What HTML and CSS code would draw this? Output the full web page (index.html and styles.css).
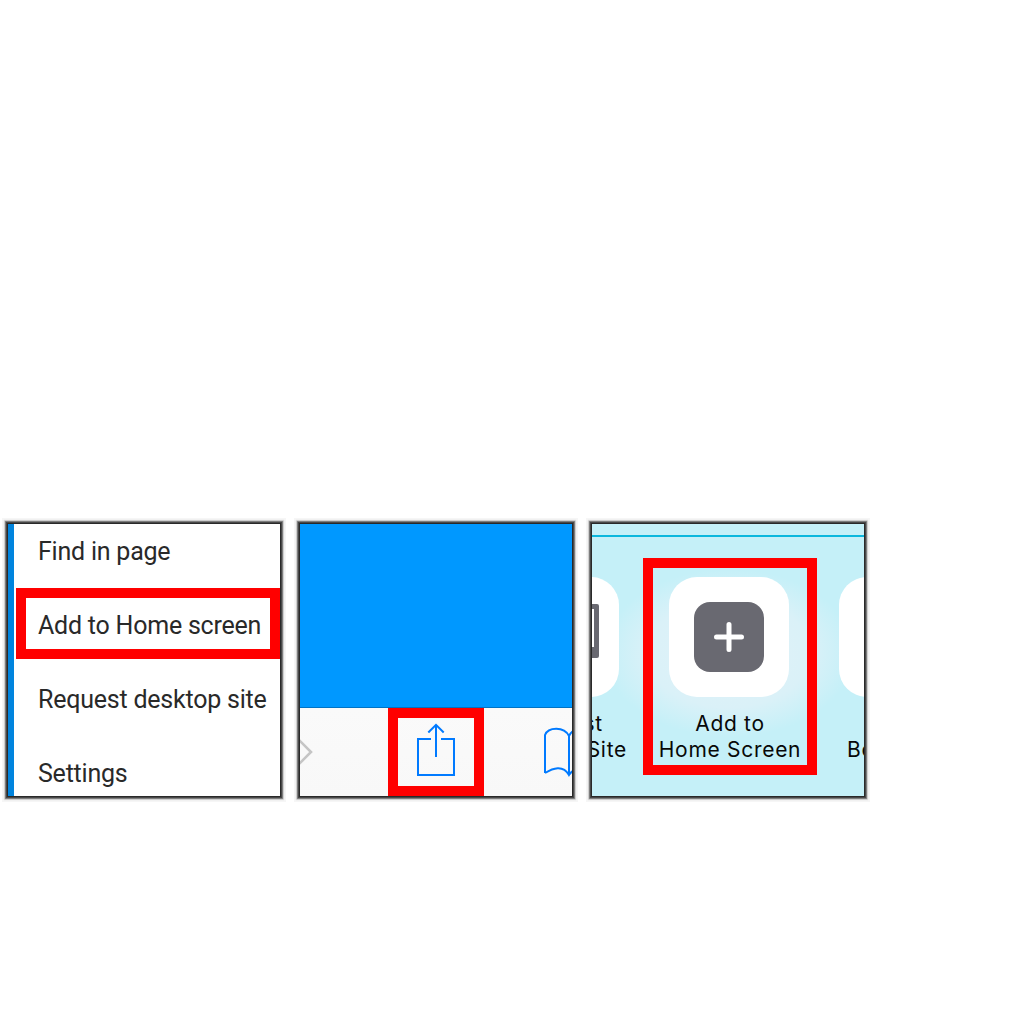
FILE: index.html
```html
<!DOCTYPE html>
<html lang="en">
<head>
<meta charset="utf-8">
<title>Add to Home screen</title>
<link rel="stylesheet" href="styles.css">
</head>
<body>
<main class="guide">
  <section class="panel menu">
    <ul class="menu-list">
      <li>Find in page</li>
      <li>Add to Home screen</li>
      <li>Request desktop site</li>
      <li>Settings</li>
    </ul>
    <div class="mark mark-menu"></div>
  </section>
  <section class="panel browser">
    <div class="page"></div>
    <div class="toolbar">
      <svg width="272" height="88" viewBox="0 0 272 88" fill="none" stroke="#007aff" stroke-width="2">
        <path d="M-1 32L11 44L-1 56" stroke="#c5c5c5" stroke-width="2.6"/>
        <path d="M131 31H118V67H154V31H141M136 49V17M128.300 24.500L136 16.800L143.700 24.500"/>
        <path d="M245 65V27C248 19 264 18 269 28C271 24 273 22 277 21M245 65C253 60 263 56.500 269 67C271 64 273 62 277 61M269 28V67"/>
      </svg>
    </div>
    <div class="mark mark-share"></div>
  </section>
  <section class="panel sheet">
    <div class="divider"></div>
    <div class="actions">
      <div class="action">
        <div class="tile"><svg width="80" height="70" viewBox="0 0 80 70"><path fill="#696971" fill-rule="evenodd" d="M2 2H78Q80 2 80 4V54Q80 56 78 56H2Q0 56 0 54V4Q0 2 2 2ZM5 7V45H75V7Z"/></svg></div>
        <p>Request<br>Desktop Site</p>
      </div>
      <div class="action">
        <div class="tile"><svg width="70" height="70" viewBox="0 0 70 70"><rect width="70" height="70" rx="16" fill="#696971"/><path d="M22.500 35H47.500M35 22.500V47.500" stroke="#fff" stroke-width="5" stroke-linecap="round"/></svg></div>
        <p>Add to<br>Home Screen</p>
      </div>
      <div class="action">
        <div class="tile"></div>
        <p class="second-line">Bookmark</p>
      </div>
    </div>
    <div class="mark mark-action"></div>
  </section>
</main>
</body>
</html>
```
FILE: styles.css
```css
* { box-sizing: border-box; }
body { margin: 0; background: #fff; }
.guide { display: flex; gap: 20px; min-height: 1024px; padding: 524px 8px 0; }
.panel {
  position: relative;
  flex: 0 0 272px;
  height: 272px;
  box-shadow: 0 0 0 1px #292929, 0 0 1px 2px #484848, 0 0 1px 3px #888, 0 0 1px 4px #ddd, 0 0 0 6px #f6f6f6;
  overflow: hidden;
}
.mark { position: absolute; border: 10px solid #f00; }

.menu { background: #fff; border-left: 6px solid #0084de; }
.menu-list {
  margin: -9px 0 0;
  padding: 0 0 0 24px;
  list-style: none;
  font: 25px/74px Roboto, sans-serif;
  letter-spacing: -.22px;
  color: #292929;
  white-space: nowrap;
}
.menu-list li { height: 74px; }
.mark-menu { left: 2px; top: 64px; width: 264px; height: 71px; }

.browser { background: #f9f9f9; }
.page { height: 184px; background: #0098ff; border-bottom: 1px solid #0073c5; }
.toolbar { height: 88px; background: linear-gradient(#fafafa, #f8f8f8); }
.toolbar svg { display: block; }
.mark-share { left: 88px; top: 184px; width: 96px; height: 88px; }

.sheet { background: radial-gradient(ellipse 125px 84px at 137px 129px, #e2f2f8 0, #daf1f8 65%, #c5f0f8 100%); }
.divider { height: 2px; margin-top: 11px; background: #0bb7dd; }
.actions { display: flex; gap: 26px; width: 484px; margin: 40px 0 0 -105px; }
.action { flex: 0 0 144px; min-width: 0; display: flex; flex-direction: column; align-items: center; }
.tile {
  display: flex;
  align-items: center;
  justify-content: center;
  width: 120px;
  height: 120px;
  border-radius: 28px;
  background: #fff;
}
.action p {
  margin: 14px 0 0 2px;
  font: 21px/26px Inter, sans-serif;
  letter-spacing: .7px;
  color: #080808;
  text-align: center;
  white-space: nowrap;
}
.action .second-line { margin-top: 40px; }
.mark-action { left: 51px; top: 34px; width: 174px; height: 217px; }
```
